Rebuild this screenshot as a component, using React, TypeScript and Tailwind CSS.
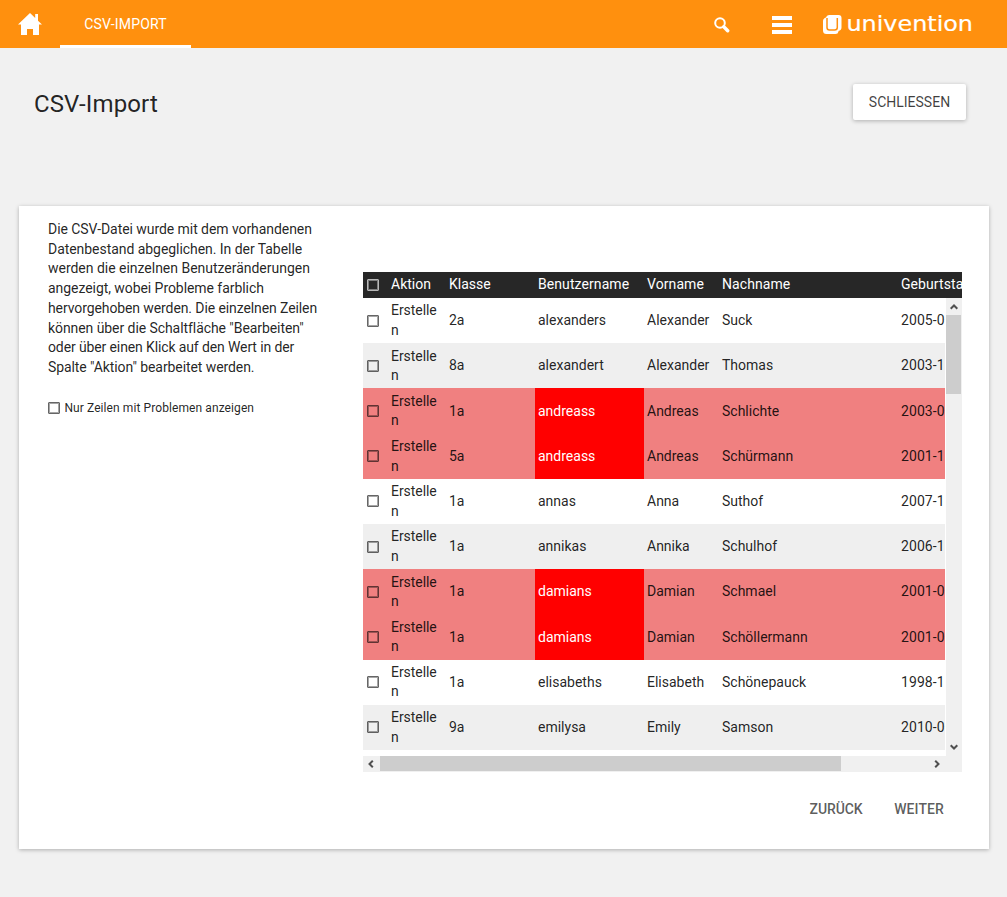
import React from 'react';

type Row = { klasse: string; user: string; first: string; last: string; birth: string; problem?: boolean };

const rows: Row[] = [
  { klasse: '2a', user: 'alexanders', first: 'Alexander', last: 'Suck', birth: '2005-0' },
  { klasse: '8a', user: 'alexandert', first: 'Alexander', last: 'Thomas', birth: '2003-1' },
  { klasse: '1a', user: 'andreass', first: 'Andreas', last: 'Schlichte', birth: '2003-0', problem: true },
  { klasse: '5a', user: 'andreass', first: 'Andreas', last: 'Schürmann', birth: '2001-1', problem: true },
  { klasse: '1a', user: 'annas', first: 'Anna', last: 'Suthof', birth: '2007-1' },
  { klasse: '1a', user: 'annikas', first: 'Annika', last: 'Schulhof', birth: '2006-1' },
  { klasse: '1a', user: 'damians', first: 'Damian', last: 'Schmael', birth: '2001-0', problem: true },
  { klasse: '1a', user: 'damians', first: 'Damian', last: 'Schöllermann', birth: '2001-0', problem: true },
  { klasse: '1a', user: 'elisabeths', first: 'Elisabeth', last: 'Schönepauck', birth: '1998-1' },
  { klasse: '9a', user: 'emilysa', first: 'Emily', last: 'Samson', birth: '2010-0' },
];

const columns = 'grid w-[690px] grid-cols-[25px_58px_89px_109px_75px_179px_155px]';

function Checkbox({ light = false }: { light?: boolean }) {
  return (
    <span
      className={
        light
          ? 'block size-3 shrink-0 rounded-[1px] border border-[#b8b8b8] shadow-[inset_0_0_0_1px_rgba(255,255,255,0.4)]'
          : 'block size-3 shrink-0 rounded-[1px] border border-black/60 shadow-[inset_0_0_0_1px_rgba(0,0,0,0.35)]'
      }
    />
  );
}

function Chevron({ turn }: { turn: string }) {
  return (
    <svg className={turn} width="8" height="8" viewBox="0 0 8 8" fill="none" stroke="#505050" strokeWidth="2">
      <path d="M0.7 5.8 4 2.5l3.3 3.3" />
    </svg>
  );
}

function Header() {
  return (
    <header className="flex h-12 bg-[#ff900e]">
      <div className="flex w-[60px] items-start pt-[13px] pl-[18px]">
        <svg width="24" height="22" viewBox="0 0 24 22" fill="#fff">
          <path d="M12 0 0 11.5h3V22h6v-6h6v6h6V11.5h3L20 7.7V1h-2.800v4z" />
        </svg>
      </div>
      <div className="flex h-12 w-[131px] items-center justify-center border-b-[3px] border-white pt-[3px] text-sm tracking-[0.14px] text-white">
        CSV-IMPORT
      </div>
      <div className="ml-auto flex items-start pr-[34px]">
        <svg className="mt-[17px] mr-[42px]" width="16" height="16" viewBox="0 0 16 16" fill="none" stroke="#fff">
          <circle cx="6" cy="6" r="4.8" strokeWidth="2" />
          <path d="m9.8 9.8 3.9 4" strokeWidth="3.4" strokeLinecap="round" />
        </svg>
        <div className="mt-4 mr-[31px] flex w-5 flex-col gap-[3px]">
          <div className="h-1 bg-white" />
          <div className="h-1 bg-white" />
          <div className="h-1 bg-white" />
        </div>
        <svg className="mt-3" width="150" height="26" viewBox="0 0 150 26">
          <path
            d="M6 3H15.500A3 3 0 0 1 18.500 6V15.500Q18.500 18 15.500 19V19.500Q15 22 12.500 22H3.500A3.500 3.500 0 0 1 0 18.500V9Q0 6.500 3 5.500Q3.500 3 6 3z"
            fill="#fff"
          />
          <path
            d="M4 6V15.500Q4 18 6.500 18H11.500Q14.300 18 14.300 15.500V6"
            fill="none"
            stroke="#ff900e"
            strokeWidth="1.500"
          />
          <text
            x="23.500"
            y="19"
            textLength="126.500"
            lengthAdjust="spacingAndGlyphs"
            fill="#fff"
            stroke="#fff"
            strokeWidth="0.200"
            className="font-['DejaVu_Sans',sans-serif] text-[21px]"
          >
            univention
          </text>
        </svg>
      </div>
    </header>
  );
}

function DataRow({ row, index }: { row: Row; index: number }) {
  const tone = row.problem ? 'bg-[#f08080]' : index % 2 ? 'bg-[#efefef]' : 'bg-white';
  return (
    <div className={`${columns} ${tone} h-[45.2px] items-center leading-[19.6px]`}>
      <div className="pt-[0.2px] pl-1">
        <Checkbox />
      </div>
      <div className="px-[3px] pt-[0.8px] tracking-[-0.06px] break-all">Erstellen</div>
      <div className="px-[3px] pt-[0.8px]">{row.klasse}</div>
      <div
        className={
          row.problem
            ? 'flex h-full items-center bg-[#ff0000] px-[3px] pt-[0.8px] text-white'
            : 'flex h-full items-center px-[3px] pt-[0.8px]'
        }
      >
        {row.user}
      </div>
      <div className="px-[3px] pt-[0.8px]">{row.first}</div>
      <div className="px-[3px] pt-[0.8px]">{row.last}</div>
      <div className="px-[3px] pt-[0.8px] tracking-[0.08px]">{row.birth}</div>
    </div>
  );
}

function DataGrid() {
  return (
    <div className="h-[500px] w-[599px] overflow-hidden">
      <div className={`${columns} h-[26px] items-center bg-[#272727] pb-[2px] text-white`}>
        <div className="pt-[2px] pl-1">
          <Checkbox light />
        </div>
        <div className="px-[3px]">Aktion</div>
        <div className="px-[3px]">Klasse</div>
        <div className="px-[3px] tracking-[0.08px]">Benutzername</div>
        <div className="px-[3px] tracking-[0.08px]">Vorname</div>
        <div className="px-[3px] tracking-[0.08px]">Nachname</div>
        <div className="px-[3px] tracking-[0.08px]">Geburtstag</div>
      </div>
      <div className="flex h-[458px]">
        <div className="w-[582px] overflow-hidden">
          {rows.map((row, i) => (
            <DataRow key={i} row={row} index={i} />
          ))}
        </div>
        <div className="ml-px flex w-4 flex-col bg-[#f0f0f0]">
          <div className="flex h-[17px] items-center justify-center pr-px">
            <Chevron turn="rotate-0" />
          </div>
          <div className="h-[79px] w-[15px] bg-[#cdcdcd]" />
          <div className="mt-auto flex h-[17px] items-center justify-center pr-px pb-[2px]">
            <Chevron turn="rotate-180" />
          </div>
        </div>
      </div>
      <div className="flex h-4 bg-[#f0f0f0]">
        <div className="flex w-[17px] items-center justify-center pr-[2px] pb-px">
          <Chevron turn="-rotate-90" />
        </div>
        <div className="h-[15px] w-[461px] bg-[#cdcdcd]" />
        <div className="mr-[17px] ml-auto flex w-[17px] items-center justify-center pb-px">
          <Chevron turn="rotate-90" />
        </div>
      </div>
    </div>
  );
}

export default function App() {
  return (
    <div className="h-[897px] overflow-hidden bg-[#f1f1f1] font-[Roboto,sans-serif] text-sm text-black/87">
      <Header />
      <div className="flex h-[157px] items-start justify-between pr-[41px] pl-[34px]">
        <h1 className="mt-[38px] text-2xl leading-9 tracking-[0.12px]">CSV-Import</h1>
        <button className="mt-9 h-9 w-[113px] rounded-[2px] bg-white text-sm text-black/75 shadow-[0_1px_4px_rgba(0,0,0,0.28)]">
          SCHLIESSEN
        </button>
      </div>
      <main className="mt-px mr-[18px] ml-[19px] flex h-[643px] bg-white shadow-[0_1px_4px_rgba(0,0,0,0.28)]">
        <section className="w-[344px] pt-[14px] pl-[29px]">
          <p className="leading-[19.7px] whitespace-nowrap">
            <span className="tracking-[-0.06px]">Die CSV-Datei wurde mit dem vorhandenen</span>
            <br />
            <span className="tracking-[-0.05px]">Datenbestand abgeglichen. In der Tabelle</span>
            <br />
            <span className="tracking-[-0.02px]">werden die einzelnen Benutzeränderungen</span>
            <br />
            <span className="tracking-[-0.06px]">angezeigt, wobei Probleme farblich</span>
            <br />
            <span className="tracking-[-0.1px]">hervorgehoben werden. Die einzelnen Zeilen</span>
            <br />
            <span className="tracking-[-0.07px]">können über die Schaltfläche "Bearbeiten"</span>
            <br />
            <span className="tracking-[-0.12px]">oder über einen Klick auf den Wert in der</span>
            <br />
            <span className="tracking-[-0.08px]">Spalte "Aktion" bearbeitet werden.</span>
          </p>
          <label className="mt-5 flex h-5 items-center gap-[4.4px] text-xs tracking-[0.09px]">
            <Checkbox />
            Nur Zeilen mit Problemen anzeigen
          </label>
        </section>
        <section className="flex w-[599px] flex-col pt-[66px]">
          <DataGrid />
          <div className="flex h-[74px] items-center justify-end gap-[31.500px] pr-[18px] text-sm font-medium text-black/65">
            <button className="tracking-[-0.08px]">ZURÜCK</button>
            <button className="tracking-[0.1px]">WEITER</button>
          </div>
        </section>
      </main>
    </div>
  );
}
